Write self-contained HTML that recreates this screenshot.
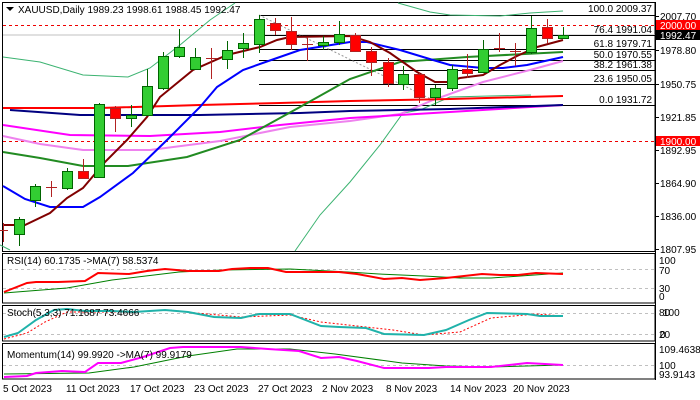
<!DOCTYPE html>
<html><head><meta charset="utf-8"><style>
html,body{margin:0;padding:0;background:#fff;width:700px;height:400px;overflow:hidden}
svg{display:block}
text{font-family:"Liberation Sans",sans-serif;font-size:10px;fill:#000}
</style></head><body>
<svg width="700" height="400" viewBox="0 0 700 400" xmlns="http://www.w3.org/2000/svg">
<rect width="700" height="400" fill="#fff"/>
<!-- main frame -->
<rect x="2.5" y="2.5" width="652.5" height="249" fill="none" stroke="#000"/>
<!-- current price line -->
<line x1="3" y1="35" x2="655" y2="35" stroke="#c0c0c0"/>
<!-- fib lines -->
<g stroke="#000" stroke-width="1">
<line x1="259" y1="15.5" x2="655" y2="15.5"/>
<line x1="259" y1="35.5" x2="655" y2="35.5"/>
<line x1="259" y1="49.5" x2="655" y2="49.5"/>
<line x1="259" y1="60.5" x2="655" y2="60.5"/>
<line x1="259" y1="70.5" x2="655" y2="70.5"/>
<line x1="259" y1="84.5" x2="655" y2="84.5"/>
<line x1="259" y1="105.5" x2="655" y2="105.5"/>
</g>
<line x1="259" y1="15" x2="433" y2="100" stroke="#999" stroke-dasharray="2,2"/>
<!-- red dashed -->
<line x1="3" y1="25.5" x2="655" y2="25.5" stroke="#e00" stroke-dasharray="3,3"/>
<line x1="3" y1="141.5" x2="655" y2="141.5" stroke="#e00" stroke-dasharray="3,3"/>
<!-- bollinger -->
<g fill="none" stroke="#3cb371" stroke-width="1">
<polyline points="3,57 40,62 83,75 128,77 150,68 180,45 210,20 235,3"/>
<polyline points="398,3 430,12 450,15 500,16 530,13 563,11"/>
<polyline points="0,245 10,250"/>
<polyline points="295,251 320,215 350,182 380,145 403,113 420,110 450,97 531,95"/>
</g>
<!-- MAs -->
<g fill="none" stroke-width="2">
<polyline stroke="#ee82ee" points="3,136 40,144 83,150 150,150 220,141 290,127 350,121 400,114 433,100 483,82 530,70 563,61"/>
<polyline stroke="#ff00ff" points="3,125 70,135 150,136 220,132 280,125 350,118 450,112 563,105"/>
<polyline stroke="#000080" points="10,110 80,115 200,115 300,113 350,111 450,109 563,105"/>
<polyline stroke="#ff0000" points="3,108 100,108 200,105 280,103 350,101 450,99 563,96"/>
<polyline stroke="#228b22" points="3,152 40,158 83,166 128,166 187,157 240,140 300,107 350,79 400,62 467,57 563,52"/>
<polyline stroke="#0000ff" points="3,186 25,199 50,207 83,207 100,197 133,173 167,140 200,107 217,87 243,70 277,58 300,50 350,42 367,42 400,50 433,60 450,65 483,68 503,68 527,65 563,57"/>
<polyline stroke="#800000" points="3,225 25,225 50,213 67,198 83,188 105,162 127,140 147,117 160,97 193,70 227,55 260,47 277,40 290,37 350,36 370,42 390,53 417,72 435,82 447,82 460,78 483,75 500,65 517,56 537,47 563,40"/>
</g>
<!-- candles -->
<g stroke-width="1">
<g stroke="#b22222" fill="#ff0000">
<line x1="3.5" y1="223" x2="3.5" y2="242"/><line x1="0" y1="230.5" x2="8" y2="230.5"/>
<line x1="51.5" y1="181" x2="51.5" y2="197"/><line x1="46" y1="187.5" x2="57" y2="187.5"/>
<line x1="83.5" y1="159" x2="83.5" y2="178"/><rect x="78.5" y="171.5" width="10" height="7"/>
<line x1="115.5" y1="106" x2="115.5" y2="132"/><rect x="110.5" y="108.5" width="10" height="10"/>
<line x1="211.5" y1="48" x2="211.5" y2="79"/><line x1="206" y1="58.5" x2="217" y2="58.5"/>
<line x1="275.5" y1="18" x2="275.5" y2="35"/><rect x="270.5" y="23.5" width="10" height="7"/>
<line x1="291.5" y1="17" x2="291.5" y2="50"/><rect x="286.5" y="31.5" width="10" height="13"/>
<line x1="307.5" y1="37" x2="307.5" y2="61"/><line x1="302" y1="44.5" x2="313" y2="44.5"/>
<line x1="355.5" y1="33" x2="355.5" y2="52"/><rect x="350.5" y="35.5" width="10" height="16"/>
<line x1="371.5" y1="47" x2="371.5" y2="76"/><rect x="366.5" y="51.5" width="10" height="11"/>
<line x1="388.5" y1="58" x2="388.5" y2="87"/><rect x="383.5" y="62.5" width="10" height="21"/>
<line x1="419.5" y1="73" x2="419.5" y2="103"/><rect x="414.5" y="74.5" width="10" height="23"/>
<line x1="467.5" y1="54" x2="467.5" y2="78"/><rect x="462.5" y="69.5" width="10" height="4"/>
<line x1="499.5" y1="33" x2="499.5" y2="52"/><line x1="494" y1="48.5" x2="505" y2="48.5"/>
<line x1="515.5" y1="43" x2="515.5" y2="66"/><line x1="510" y1="51.5" x2="521" y2="51.5"/>
<line x1="547.5" y1="19" x2="547.5" y2="43"/><rect x="542.5" y="27.5" width="10" height="11"/>
</g>
<g stroke="#006400" fill="#32cd32">
<line x1="19.5" y1="217" x2="19.5" y2="246"/><rect x="14.5" y="219.5" width="10" height="15"/>
<line x1="35.5" y1="184" x2="35.5" y2="207"/><rect x="30.5" y="186.5" width="10" height="14"/>
<line x1="67.5" y1="168" x2="67.5" y2="190"/><rect x="62.5" y="171.5" width="10" height="17"/>
<line x1="99.5" y1="103" x2="99.5" y2="177"/><rect x="94.5" y="104.5" width="10" height="73"/>
<line x1="131.5" y1="105" x2="131.5" y2="127"/><rect x="126.5" y="115.5" width="10" height="3"/>
<line x1="147.5" y1="69" x2="147.5" y2="115"/><rect x="142.5" y="86.5" width="10" height="29"/>
<line x1="163.5" y1="52" x2="163.5" y2="90"/><rect x="158.5" y="56.5" width="10" height="32"/>
<line x1="179.5" y1="29" x2="179.5" y2="58"/><rect x="174.5" y="47.5" width="10" height="9"/>
<line x1="195.5" y1="48" x2="195.5" y2="69"/><rect x="190.5" y="57.5" width="10" height="12"/>
<line x1="227.5" y1="41" x2="227.5" y2="69"/><rect x="222.5" y="50.5" width="10" height="9"/>
<line x1="243.5" y1="33" x2="243.5" y2="58"/><rect x="238.5" y="43.5" width="10" height="5"/>
<line x1="259.5" y1="15" x2="259.5" y2="53"/><rect x="254.5" y="19.5" width="10" height="25"/>
<line x1="323.5" y1="36" x2="323.5" y2="50"/><rect x="318.5" y="42.5" width="10" height="3"/>
<line x1="339.5" y1="21" x2="339.5" y2="45"/><rect x="334.5" y="34.5" width="10" height="8"/>
<line x1="403.5" y1="66" x2="403.5" y2="90"/><rect x="398.5" y="74.5" width="10" height="10"/>
<line x1="435.5" y1="85" x2="435.5" y2="105"/><rect x="430.5" y="88.5" width="10" height="9"/>
<line x1="452.5" y1="65" x2="452.5" y2="91"/><rect x="447.5" y="69.5" width="10" height="19"/>
<line x1="483.5" y1="40" x2="483.5" y2="73"/><rect x="478.5" y="49.5" width="10" height="23"/>
<line x1="531.5" y1="16" x2="531.5" y2="54"/><rect x="526.5" y="28.5" width="10" height="24"/>
<line x1="563.5" y1="27" x2="563.5" y2="38"/><rect x="558.5" y="35.5" width="10" height="3"/>
</g>
</g>
<!-- title -->
<path d="M6,7 L14,7 L10,11 Z" fill="#000"/>
<text x="18" y="13">XAUUSD,Daily  1989.23 1998.61 1988.45 1992.47</text>
<!-- fib labels -->
<g text-anchor="end">
<text x="652" y="12">100.0 2009.37</text>
<text x="652" y="33">76.4 1991.04</text>
<text x="652" y="47">61.8 1979.71</text>
<text x="652" y="58">50.0 1970.55</text>
<text x="652" y="68">38.2 1961.38</text>
<text x="652" y="82">23.6 1950.05</text>
<text x="652" y="103">0.0 1931.72</text>
</g>
<!-- axis -->
<line x1="655.5" y1="2" x2="655.5" y2="380" stroke="#000"/>
<g stroke="#000">
<line x1="655" y1="16.5" x2="659" y2="16.5"/><line x1="655" y1="50.5" x2="659" y2="50.5"/><line x1="655" y1="84.5" x2="659" y2="84.5"/><line x1="655" y1="117.5" x2="659" y2="117.5"/><line x1="655" y1="150.5" x2="659" y2="150.5"/><line x1="655" y1="183.5" x2="659" y2="183.5"/><line x1="655" y1="216.5" x2="659" y2="216.5"/><line x1="655" y1="249.5" x2="659" y2="249.5"/>
</g>
<text x="660" y="20">2007.70</text>
<text x="660" y="54">1978.80</text>
<text x="660" y="88">1950.75</text>
<text x="660" y="121">1921.85</text>
<text x="660" y="154">1892.95</text>
<text x="660" y="187">1864.90</text>
<text x="660" y="220">1836.00</text>
<text x="660" y="253">1807.95</text>
<rect x="656" y="20" width="44" height="10" fill="#ff0000"/>
<text x="660" y="29" style="fill:#fff">2000.00</text>
<rect x="656" y="30" width="44" height="10" fill="#000"/>
<text x="660" y="39" style="fill:#fff">1992.47</text>
<rect x="656" y="136" width="44" height="10" fill="#ff0000"/>
<text x="660" y="145" style="fill:#fff">1900.00</text>

<!-- RSI panel -->
<rect x="2.5" y="253.5" width="652.5" height="49.5" fill="none" stroke="#000"/>
<line x1="3" y1="269.5" x2="655" y2="269.5" stroke="#c0c0c0" stroke-dasharray="3,3"/>
<line x1="3" y1="288.5" x2="655" y2="288.5" stroke="#c0c0c0" stroke-dasharray="3,3"/>
<polyline fill="none" stroke="#008000" stroke-width="1" points="4,293 67,288 112,280 179,272 223,270 290,269 348,272 379,274 424,276 460,278 491,278 563,273"/>
<polyline fill="none" stroke="#ff0000" stroke-width="2" points="4,292 27,283 36,282 58,282 85,281 98,273 129,274 147,271 165,269 188,271 219,271 232,269 250,268 268,268 286,272 339,272 357,274 384,279 402,278 420,280 446,278 455,277 482,274 500,275 518,275 536,273 563,274"/>
<text x="7" y="264">RSI(14) 60.1735  -&gt;MA(7) 58.5374</text>
<text x="659" y="264">100</text><text x="659" y="274">70</text><text x="659" y="292">30</text><text x="659" y="300">0</text>

<!-- Stoch panel -->
<rect x="2.5" y="305.5" width="652.5" height="35.5" fill="none" stroke="#000"/>
<line x1="3" y1="313.5" x2="655" y2="313.5" stroke="#c0c0c0" stroke-dasharray="3,3"/>
<line x1="3" y1="334.5" x2="655" y2="334.5" stroke="#c0c0c0" stroke-dasharray="3,3"/>
<polyline fill="none" stroke="#ff0000" stroke-width="1" stroke-dasharray="2,2" points="4,339 27,333 45,322 67,312 134,312 170,310 196,313 241,317 290,315 321,322 357,326 393,330 424,335 460,332 491,318 536,314 563,316"/>
<polyline fill="none" stroke="#20b2aa" stroke-width="2" points="4,337 18,333 36,320 54,310 67,309 85,311 112,311 134,312 165,310 188,312 214,317 241,318 259,314 290,314 321,326 339,327 366,328 384,334 424,335 446,330 469,320 487,313 527,314 540,316 563,316"/>
<text x="7" y="316">Stoch(5,3,3) 71.1687 73.4666</text>
<text x="659" y="316">80</text><text x="663" y="316">100</text><text x="659" y="338">20</text><text x="660" y="338">0</text>

<!-- Momentum panel -->
<rect x="2.5" y="343.5" width="652.5" height="35.5" fill="none" stroke="#000"/>
<line x1="3" y1="365.5" x2="655" y2="365.5" stroke="#c0c0c0" stroke-dasharray="3,3"/>
<polyline fill="none" stroke="#008000" stroke-width="1" points="4,374 89,373 134,367 188,356 237,349 290,349 335,354 402,363 446,366 491,367 563,365"/>
<polyline fill="none" stroke="#ff00ff" stroke-width="2" points="4,377 27,376 36,373 62,371 85,372 98,363 121,363 143,357 170,348 183,347 241,347 268,349 299,351 321,358 339,357 357,361 384,368 429,368 446,367 491,367 527,363 563,365"/>
<text x="7" y="358">Momentum(14) 99.9920  -&gt;MA(7) 99.9179</text>
<text x="659" y="353">109.4638</text><text x="659" y="369">100</text><text x="659" y="378">93.9143</text>

<!-- dates -->
<g>
<text x="3" y="392">5 Oct 2023</text>
<text x="66" y="392">11 Oct 2023</text>
<text x="130" y="392">17 Oct 2023</text>
<text x="194" y="392">23 Oct 2023</text>
<text x="258" y="392">27 Oct 2023</text>
<text x="322" y="392">2 Nov 2023</text>
<text x="386" y="392">8 Nov 2023</text>
<text x="450" y="392">14 Nov 2023</text>
<text x="513" y="392">20 Nov 2023</text>
</g>
</svg>
</body></html>
